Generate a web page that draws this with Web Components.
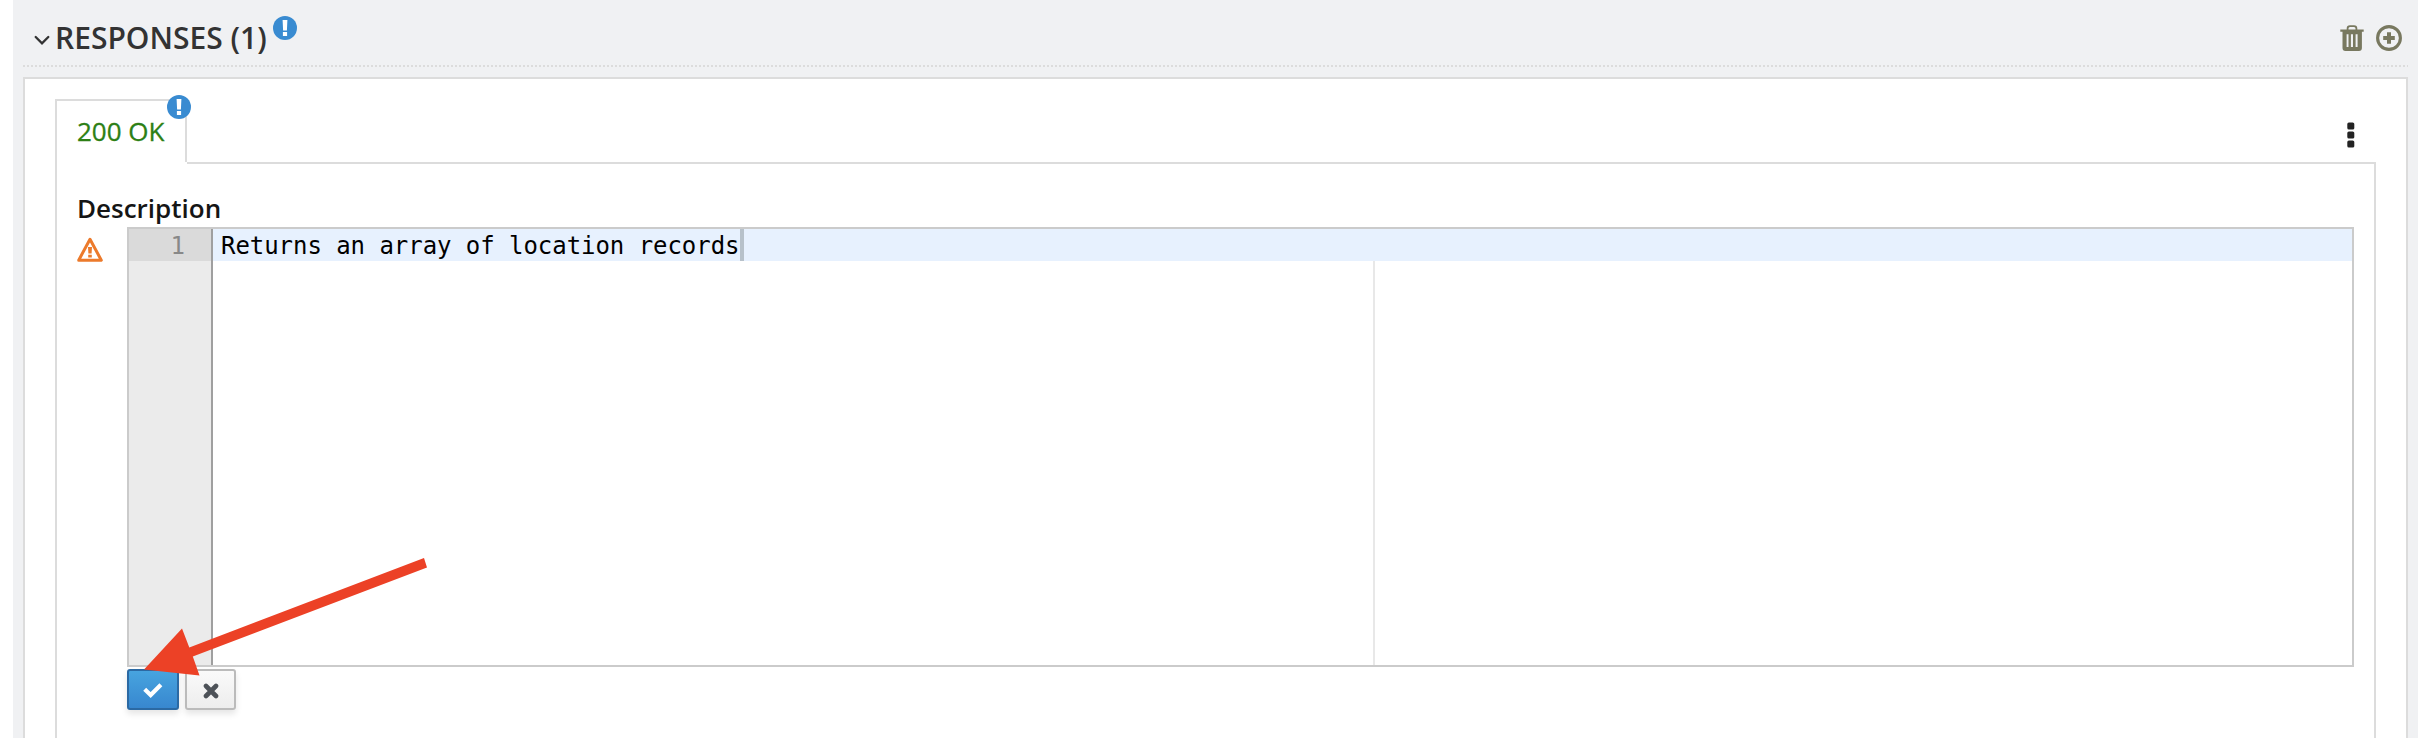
<!DOCTYPE html>
<html lang="en">
<head>
<meta charset="utf-8">
<title>Responses</title>
<style>
body{margin:0;background:#fff;height:738px;overflow:hidden;font-family:"Open Sans",sans-serif}
</style>
</head>
<body>
<response-section>
  <section-header slot="header" heading="RESPONSES (1)"></section-header>
  <response-tabs>
    <description-field label="Description">
      <code-editor>Returns an array of location records</code-editor>
      <icon-button slot="actions" kind="primary" label="Save"></icon-button>
      <icon-button slot="actions" kind="default" label="Cancel"></icon-button>
    </description-field>
  </response-tabs>
</response-section>
<pointer-arrow></pointer-arrow>
<script>
const define = (name, html, setup) => customElements.define(name, class extends HTMLElement {
  connectedCallback() {
    if (this.shadowRoot) return;
    const root = this.attachShadow({mode: 'open'});
    const t = document.createElement('template');
    t.innerHTML = '<style>:host,*{box-sizing:border-box}svg{display:block}</style>' + html;
    root.append(t.content.cloneNode(true));
    if (setup) setup(this, root);
  }
});

define('info-badge', `
<style>:host{display:block;width:24px;height:24px}</style>
<svg width="24" height="24" viewBox="0 0 24 24"><circle cx="12" cy="12" r="12" fill="#398bd1"/><path d="M9.6 4h4.8l-.5 10.5h-3.8zM9.9 16h4.2v4H9.9z" fill="#fff"/></svg>`);

define('response-section', `
<style>
:host{display:block;margin:0 16px 0 13px;height:738px;background:#f0f1f3;padding:0 10px}
.panel{border:2px solid #dcdcdc;border-bottom:0;background:#fff;margin-top:10px;height:661px;padding:20px 30px 0}
</style>
<slot name="header"></slot><div class="panel"><slot></slot></div>`);

define('section-header', `
<style>
:host{display:flex;height:67px;align-items:flex-start}
:host{background:repeating-linear-gradient(90deg,#dcdcdc 0 2px,transparent 2px 4px) 0 65px/100% 2px no-repeat}
.chev{margin:35px 0 0 10.5px}
h2{margin:17px 0 0 5.500px;font-size:30px;line-height:42px;font-weight:600;color:#333;white-space:nowrap;width:213px}
info-badge{margin:16px 0 0 5px}
.tools{margin:25px 6px 0 auto;display:flex;gap:12px}
</style>
<svg class="chev" width="16" height="11" viewBox="0 0 16 11"><path d="M1.7 2l6.3 6.3L14.3 2" fill="none" stroke="#333" stroke-width="2.3" stroke-linecap="round"/></svg>
<h2></h2><info-badge></info-badge>
<div class="tools">
<svg width="24" height="26" viewBox="0 0 24 26"><path d="M7.6 5V3.6Q7.6 1.2 10 1.2h4q2.4 0 2.4 2.4V5" fill="none" stroke="#78785f" stroke-width="1.8"/><path fill="#78785f" fill-rule="evenodd" d="M.3 4.6h23.4v2.2h-1.8V23q0 3-3 3H5.500q-3 0-3-3V6.800H.3zM6.600 9.200v12.800h1.900V9.200zM10.900 9.200v12.800h2.100V9.200zM15.600 9.200v12.800h2V9.200z"/></svg>
<svg width="26" height="26" viewBox="0 0 26 26"><circle cx="13" cy="13" r="11.400" fill="none" stroke="#78785f" stroke-width="3.100"/><path d="M13 7.200v11.600M7.200 13h11.600" stroke="#78785f" stroke-width="4"/></svg>
</div>`, (h, r) => r.querySelector('h2').textContent = h.getAttribute('heading'));

define('response-tabs', `
<style>
:host{display:block}
.bar{display:flex;height:63px;width:2321px}
.tab{position:relative;width:132px;height:63px;border:2px solid #dcdcdc;border-bottom:0;padding:11px 0 0 20px;font-size:26px;line-height:38px;color:#2d7f15;white-space:nowrap;-webkit-text-stroke:.3px #2d7f15}
.tab info-badge{position:absolute;right:-6px;top:-6px}
.rest{flex:1;display:flex;justify-content:flex-end;padding:23px 21px 0 0}
.body{width:2321px;height:576px;border:2px solid #dcdcdc;border-bottom:0;border-top:0;padding:0 20px;background:linear-gradient(#dcdcdc,#dcdcdc) 130px 0/100% 2px no-repeat}
</style>
<div class="bar"><div class="tab">200 OK<info-badge></info-badge></div>
<div class="rest"><svg width="8" height="26" viewBox="0 0 8 26"><g fill="#222"><rect x=".3" y=".4" width="7" height="7.200" rx="1.600"/><rect x=".3" y="9.400" width="7" height="7.200" rx="1.600"/><rect x=".3" y="18.400" width="7" height="7.200" rx="1.600"/></g></svg></div></div>
<div class="body"><slot></slot></div>`);

define('description-field', `
<style>
:host{display:block;padding-top:27px}
label{display:block;height:38px;line-height:38px;font-size:26px;font-weight:600;color:#151515;white-space:nowrap}
.row{display:flex;align-items:flex-start}
.warn{margin:10px 23px 0 0;flex:none;width:27px}
.actions{display:flex;gap:6px;margin:2px 0 0 50px}
</style>
<label></label>
<div class="row"><svg class="warn" width="27" height="26" viewBox="0 0 27 26"><path d="M13 2.200L24.300 23.200H1.700z" fill="none" stroke="#ec7a2b" stroke-width="3" stroke-linejoin="round"/><path d="M11 10h4l-.4 6.600h-3.200zM11.200 17.800h3.600v2.600h-3.600z" fill="#ec7a2b"/></svg>
<slot></slot></div>
<div class="actions"><slot name="actions"></slot></div>`, (h, r) => r.querySelector('label').textContent = h.getAttribute('label'));

define('code-editor', `
<style>
:host{display:grid;grid-template-columns:84px 1fr;width:2227px;height:440px;border:2px solid #cbcbcb;font:24px/32px "DejaVu Sans Mono",monospace}
.gutter{background:#ebebeb;border-right:2px solid #9f9f9f}
.num{height:32px;background:#dadada;color:#888;text-align:right;padding-right:26px;line-height:34px}
.code{background:linear-gradient(#e8e8e8,#e8e8e8) 1160px 0/2px 100% no-repeat}
.line{height:32px;background:#e7f1fe;padding-left:8px;display:flex;color:#000;white-space:pre;letter-spacing:-.047px}
.cursor{width:4px;height:32px;background:#b7c1ca}
.text{width:519px;line-height:34px}
</style>
<div class="gutter"><div class="num">1</div></div>
<div class="code"><div class="line"><span class="text"><slot></slot></span><span class="cursor"></span></div></div>`);

define('icon-button', `
<style>
:host{display:block}
button{display:flex;align-items:center;justify-content:center;width:51px;height:41px;padding:2px 0 0;border:2px solid #bbb;border-radius:3px;background:linear-gradient(#fafafa,#ededed);box-shadow:0 4px 6px rgba(3,3,3,.1)}
:host([kind=primary]) button{width:52px;border-color:#2b69a3;background:linear-gradient(#47a4df,#3887cf)}
</style><button></button>`, (h, r) => {
  const b = r.querySelector('button');
  b.setAttribute('aria-label', h.getAttribute('label'));
  b.innerHTML = h.getAttribute('kind') === 'primary'
    ? '<svg width="20" height="16" viewBox="0 0 20 16"><path d="M2.800 7.700L7.600 12.400L17 3" fill="none" stroke="#fff" stroke-width="4.500" stroke-linejoin="miter" stroke-linecap="square" transform="translate(.6 .5) scale(.93)"/></svg>'
    : '<svg width="16" height="16" viewBox="0 0 16 16"><path d="M3 3l10 10M13 3L3 13" stroke="#4d5258" stroke-width="4.600" stroke-linecap="round"/></svg>';
});

define('pointer-arrow', `
<style>:host{display:block;position:absolute;left:140px;top:552px;width:292px;height:128px;pointer-events:none}</style>
<svg width="292" height="128" viewBox="0 0 292 128"><path d="M284 6L287 15.500L52.800 104.500L59.500 123.500L4 117.500L42 76.500L49.300 95.500z" fill="#ec4126"/></svg>`);
</script>
</body>
</html>
